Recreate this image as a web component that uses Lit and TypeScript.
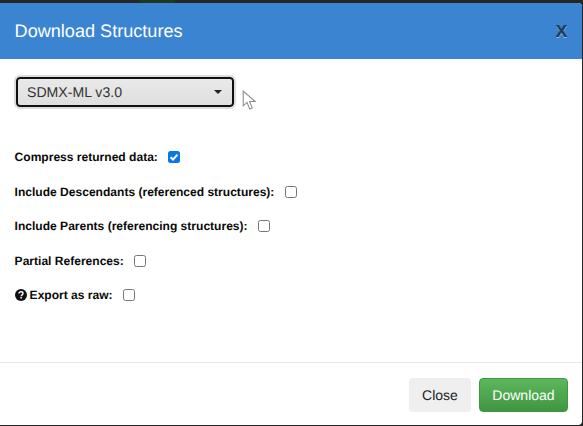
import { LitElement, html, css } from "lit";
import { customElement } from "lit/decorators.js";

@customElement("app-root")
export class AppRoot extends LitElement {
  static styles = css`
    :host {
      display: block;
      position: relative;
      width: 583px;
      height: 426px;
      overflow: hidden;
      background: #262626;
      font-family: "Liberation Sans", Arial, sans-serif;
      color: #0a0a0a;
      text-rendering: geometricPrecision;
    }
    .strip {
      position: absolute;
      left: 140px;
      top: 0;
      width: 35px;
      height: 3px;
      background: #1c3a1c;
    }
    .modal {
      position: absolute;
      inset: 3px 1px 1px 0;
      display: flex;
      flex-direction: column;
      background: #fff;
      border-radius: 0 4px 4px 0;
      overflow: hidden;
    }
    header {
      height: 56px;
      flex: none;
      box-sizing: border-box;
      padding: 0 15px 0 14.6px;
      display: flex;
      align-items: center;
      justify-content: space-between;
      background: #3a84d2;
    }
    h1 {
      margin: 0;
      font-size: 18.1px;
      font-weight: 400;
      color: #fff;
    }
    .x {
      font-size: 17px;
      font-weight: 700;
      line-height: 1;
      color: #1d3b5c;
      text-shadow: 0 1px 0 #cfe0f2;
      -webkit-text-stroke: 0.4px #1d3b5c;
    }
    .body {
      flex: 1;
      padding: 18px 15px 0 14.6px;
    }
    .select-wrap {
      width: 218px;
      height: 30px;
      box-sizing: border-box;
      border: 2px solid #101010;
      border-radius: 4px;
      outline: 2px solid #dcdcdc;
      margin: 0 0 0 1.9px;
      padding: 0 10px 0 8.5px;
      display: flex;
      align-items: center;
      justify-content: space-between;
      background: linear-gradient(#e9e9e9, #dfdfdf);
      font-size: 14.1px;
      color: #333;
    }
    .caret {
      width: 0;
      height: 0;
      border-left: 4px solid transparent;
      border-right: 4px solid transparent;
      border-top: 4px solid #222;
    }
    .options {
      margin-top: 40px;
      display: flex;
      flex-direction: column;
      gap: 14.5px;
    }
    .row {
      display: flex;
      align-items: center;
      height: 20px;
      font-size: 12.06px;
      font-weight: 700;
    }
    .row svg.help {
      margin-right: 3px;
    }
    .box {
      box-sizing: border-box;
      width: 12px;
      height: 12px;
      margin-left: 10.5px;
      border: 1px solid #767676;
      border-radius: 2.5px;
      background: #fff;
      display: block;
    }
    .box.on {
      border: none;
      background: #0b76e8;
    }
    .box svg {
      display: block;
    }
    footer {
      height: 63px;
      flex: none;
      box-sizing: border-box;
      border-top: 1px solid #e8e8e8;
      padding: 15px 14px 0 15px;
      display: flex;
      justify-content: flex-end;
      align-items: flex-start;
      gap: 8px;
    }
    .btn {
      height: 34px;
      box-sizing: border-box;
      border-radius: 4px;
      font-size: 14px;
      display: flex;
      align-items: center;
      justify-content: center;
    }
    .close {
      width: 62px;
      background: #efefef;
      color: #222;
    }
    .dl {
      width: 89px;
      color: #fff;
      border: 1px solid #419641;
      background: linear-gradient(#5cb85c, #419641);
    }
    .cursor {
      position: absolute;
      left: 242px;
      top: 90px;
    }
  `;

  private row(label: string, on = false, help = false) {
    return html`<div class="row">
      ${help
        ? html`<svg class="help" width="12" height="12" viewBox="0 0 12 12">
            <circle cx="6" cy="6" r="6" fill="#111"></circle>
            <path d="M4 4.6C4 3.4 5 2.8 6 2.8s2 .6 2 1.7c0 1.4-1.8 1.3-1.8 2.7" fill="none" stroke="#fff" stroke-width="1.4"></path>
            <rect x="5.4" y="8" width="1.5" height="1.5" fill="#fff"></rect>
          </svg>`
        : null}
      <span>${label}</span>
      <span class="box ${on ? "on" : ""}">
        ${on
          ? html`<svg width="12" height="12" viewBox="0 0 12 12">
              <path d="M2.6 6.3 5 8.6 9.4 3.6" fill="none" stroke="#fff" stroke-width="2"></path>
            </svg>`
          : null}
      </span>
    </div>`;
  }

  render() {
    return html`
      <div class="strip"></div>
      <div class="modal">
        <header>
          <h1>Download Structures</h1>
          <span class="x">X</span>
        </header>
        <div class="body">
          <div class="select-wrap"><span>SDMX-ML v3.0</span><span class="caret"></span></div>
          <div class="options">
            ${this.row("Compress returned data:", true)}
            ${this.row("Include Descendants (referenced structures):")}
            ${this.row("Include Parents (referencing structures):")}
            ${this.row("Partial References:")}
            ${this.row("Export as raw:", false, true)}
          </div>
        </div>
        <footer>
          <div class="btn close">Close</div>
          <div class="btn dl">Download</div>
        </footer>
      </div>
      <svg class="cursor" width="14" height="20" viewBox="0 0 13 19">
        <path d="M1 1 V15 L4.6 11.8 L7.2 18 L9.6 17 L7 11 L12.4 11 Z" fill="#fff" stroke="#8a8a8a" stroke-width="1"></path>
      </svg>
    `;
  }
}
